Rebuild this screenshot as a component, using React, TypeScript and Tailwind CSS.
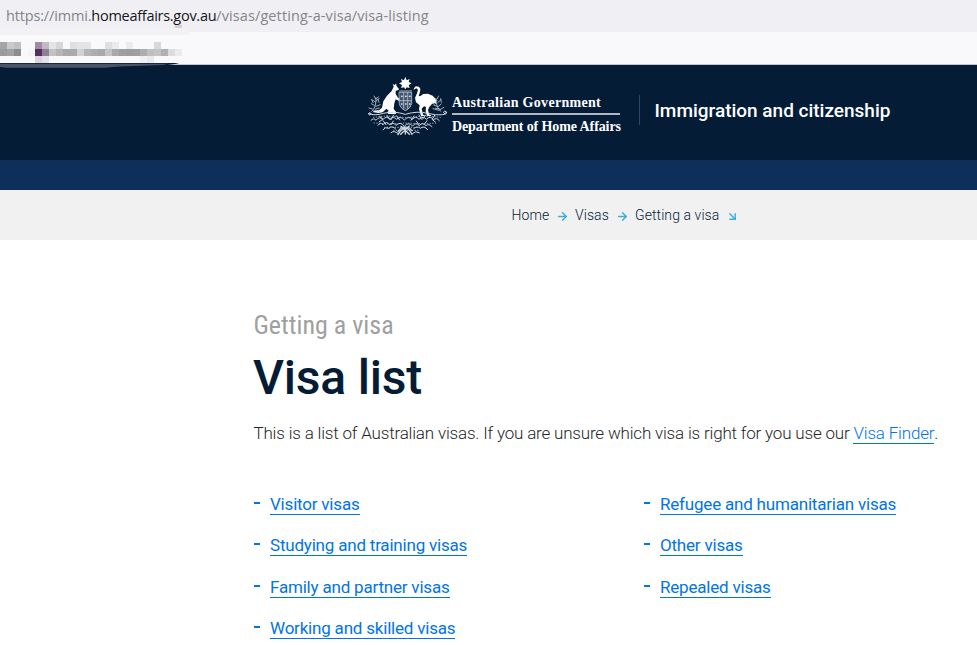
import { ArrowDownRight, ArrowRight } from 'lucide-react';

const leftLinks = ['Visitor visas', 'Studying and training visas', 'Family and partner visas', 'Working and skilled visas'];
const rightLinks = ['Refugee and humanitarian visas', 'Other visas', 'Repealed visas'];

// censored bookmarks, one row of 7px cells per entry
const bookmarkCells = [
  ['#a5a5a8', '#c9c9cc', '#c0c0c3', '', '', '#9f8ba2', '#c2bbc7', '#e4e4e7', '#d6d6d9', '', '#dfdfe2', '#e4e4e7', '#e4e4e7', '', '', '#dfdfe2', '#ebebed', '', '#ebebed', '', '', '', '#d8d8db', '', '', ''],
  ['#9b9b9e', '#a2a2a5', '#8d8d90', '', '#f5f5f7', '#55305b', '#917d96', '#c3c3c6', '#b5b5b8', '#a9a9ac', '#aaaaad', '#d2d2d5', '#b5b5b8', '#adadb0', '#a9a9ac', '#c4c4c7', '#a9a9ac', '#9f9fa2', '#9d9da0', '#9f9fa2', '#adadb0', '#bfbfc2', '#c3c3c6', '#b1b1b4', '#dcdcdf', '#ebebed'],
  ['', '', '', '', '', '#dad3de', '#e5e0e8', '', '', '', '', '', '', '', '', '', '', '', '', '', '#f0f0f2', '#e9e9eb', '', '', '', ''],
];

function Crest() {
  return (
    <svg className="-ml-px h-[60px] w-20 shrink-0" viewBox="24 18 240 180" fill="none" stroke="#e6eaef" strokeLinecap="round" strokeLinejoin="round">
      {/* star */}
      <path fill="#fff" stroke="none" d="M139 20l4 11 9-4-3 9 9 4-9 5 3 9-9-2-4 6-4-6-9 2 3-9-9-5 9-4-3-9 9 4z" />
      <path stroke="#aeb9c7" strokeWidth="3" d="M122 63h36" />
      {/* kangaroo */}
      <path fill="#fff" stroke="none" d="M104 50l-3-9 6 5 4-6 2 9 7 8-3 4-7 1v10l8 13 8-3 2 4-9 6-9-4-4 12-2 17 8 10-2 5H88l-3-5 4-5-7-6-11 11-12 2-16-2v-4l18-3 8-7 4-19 11-17 14-14z" />
      {/* emu */}
      <path fill="#fff" stroke="none" d="M165 55l5-6 10 1 4 7-1 10-4 10 4 2 10-7 14-1 14 6 9 10 2 16-6-5-8 5-7 8-4 9 4 14 5 2v2h-12l-4-14 1-13-6-2-7 7 4 18 5 2v2h-11l-6-20 2-12-11-9-3-13 6-14 3-11-5-4-8 4z" />
      {/* shield */}
      <path fill="#42546b" stroke="#b5bfcb" strokeWidth="2.5" d="M121 67h37v34q-2 13-18 21-17-7-19-21zM134 68v47M146 68v47M121 92h37" />
      <path stroke="#dfe4ea" strokeWidth="5" strokeDasharray="1 11" d="M128 79h30M128 102h26" />
      {/* wattle sprays */}
      <g strokeWidth="2.5" stroke="#bcc6d2">
        <path d="M38 124q15-12 13-41M46 106l-9-5m12-5-10-7m13 4 8-8m-9 24 13-5m-15 13 12-3M50 87l-5-9m7 9 7-7M40 117l-10-3M45 122l18 2M42 98l-4-9m22 8-3-9" />
        <path d="M246 124q-17-13-14-37M238 109l9-7m-11-4 10-9m-12 3-7-8m9 26-12-5m18 12-12-2M234 87l5-9m4 41 12-7M226 102l-8-5M222 116l18 5m7-24-2-11" />
      </g>
      {/* scrolls and foliage */}
      <g strokeWidth="3" stroke="#d3dae2">
        <path d="M28 131q4-6 9 0-5 8-9 0 19 7 46-1 30-8 65 3 36-11 67-3 26 7 45 4 14-1 12-8-6-6-10 1 2 6 7 2" />
        <path d="M36 151q8-9 15 0 10-14 22-3 8-12 20 0 9-12 20 0 11-12 23 2 12-14 24-2 10-12 20 0 13-12 22 0 12-12 22 1 8-8 17 3" />
        <path d="M57 166q6-11 15-2 11-13 20 1 9-11 19 1 13-13 25 3 12-15 25-1 9-13 20-1 10-12 20 0 8-8 18 3" />
        <path d="M72 179q6-10 18-4 9-10 20 2m54-1q10-10 20-1 11-10 22 4M96 188q9-8 20 2M161 190q8-9 20-2" />
        <path d="M62 138l9 10-11 8m24-20 9 12m11-13-8 14m104-14-9 12m-11-12 8 13m39-12-8 12 10 8M112 137l10 13m43-12-9 13M72 152l9 12m123-12-9 12M103 153l-7 11m76-11 8 11" />
        <path strokeWidth="4" d="M117 185q20-31 42 8M159 182q-20-26-42 12M126 169l25 24M151 168l-26 25M139 172v20" />
      </g>
      <path stroke="#b5bfcb" strokeWidth="3" strokeDasharray="1 7" d="M44 142q45-7 97 1 52-8 103-1M45 159q50 4 90 0 50 3 101 0M77 172h124M104 181h73" />
    </svg>
  );
}

function LinkList({ items }: { items: string[] }) {
  return (
    <ul className="w-[390px] shrink-0">
      {items.map(item => (
        <li key={item} className="flex h-[41.4px] items-start">
          <span className="mt-[9px] h-0.5 w-1.5 bg-[#0074e8]" />
          <a href="#" className="ml-2.5 h-[22px] border-b border-[#0074e8] text-[17px] leading-[22px] tracking-[-0.2px] whitespace-nowrap text-[#0074e8]">{item}</a>
        </li>
      ))}
    </ul>
  );
}

export default function App() {
  return (
    <div className="h-[645px] w-[977px] overflow-hidden bg-white font-['Roboto',sans-serif]">
      <div className="h-8 bg-[#f0f0f4] pl-1.5 font-['Open_Sans',sans-serif] text-[14.5px] leading-8 whitespace-nowrap text-[#85858a]">
        <span className="tracking-[-0.16px]">https://immi.</span>
        <span className="tracking-[-0.28px] text-[#15141a]">homeaffairs.gov.au</span>
        <span className="tracking-[0.1px]">/visas/getting-a-visa/visa-listing</span>
      </div>

      <div className="relative h-[33px] border-b border-[#c4c4c8] bg-[#f9f9fb] pt-2.5">
        <div className="absolute -top-1 left-0 h-[7px] w-[190px] rounded-tr-[10px] bg-[#f2f2f5]" />
        <div className="absolute -top-[7px] left-[175px] h-[3px] w-[7px] bg-[#d1d1d5]" />
        {bookmarkCells.map((row, i) => (
          <div key={i} className="flex">
            {row.map((color, j) => (
              <span key={j} className="size-[7px]" style={{ backgroundColor: color || undefined }} />
            ))}
          </div>
        ))}
        <svg className="absolute top-[31px] left-0 h-[5px] w-[180px]" viewBox="0 0 180 5">
          <path fill="#061c36" d="M0 0h179q-2 1-12 2v3H0z" />
          <path fill="#47546a" d="M0 .8h168l-5 1.2-43 1.5-15 1.3H6L0 4z" />
        </svg>
      </div>

      <header className="flex h-[95px] bg-[#051c37] pt-[11px] pl-[368px] text-white">
        <Crest />
        <div className="ml-[5px] w-[168px] pt-[17px] font-['Liberation_Serif',serif] text-[14px] leading-[19px] font-bold whitespace-nowrap">
          <div className="h-[22px] border-b-2 border-[#aeb7c2] tracking-[0.3px]">Australian Government</div>
          <div className="mt-0.5 tracking-[-0.1px]">Department of Home Affairs</div>
        </div>
        <div className="mt-[19px] ml-[19px] h-[30px] border-l border-[#34475e]" />
        <div className="mt-[23px] ml-[14.5px] text-[19px] leading-6 font-medium tracking-[-0.01px] whitespace-nowrap">Immigration and citizenship</div>
      </header>
      <div className="h-[30px] bg-[#0f2f5b]" />

      <nav className="flex h-[50px] items-center bg-[#f1f1f1] pl-[511.5px] text-[14px] font-light tracking-[0.08px] whitespace-nowrap text-[#051c37]">
        <span className="w-[44px]">Home</span>
        <ArrowRight className="mt-0.5 mr-[6.5px] size-[13px] text-[#35ade0]" strokeWidth={2.6} />
        <span className="w-[40.5px]">Visas</span>
        <ArrowRight className="mt-0.5 mr-[6.5px] size-[13px] text-[#35ade0]" strokeWidth={2.6} />
        <span className="w-[91px]">Getting a visa</span>
        <ArrowDownRight className="mt-0.5 size-[13px] text-[#35ade0]" strokeWidth={2.6} />
      </nav>

      <main className="pt-[69px] pl-[254px]">
        <p className="-ml-[0.5px] h-8 font-['Roboto_Condensed','Roboto',sans-serif] text-[26px] leading-8 [font-stretch:75%] whitespace-nowrap text-[#a0a0a0]">Getting a visa</p>
        <h1 className="mt-[9px] -ml-px h-14 text-[48px] leading-[56px] font-medium tracking-[-0.22px] text-[#051c37]">Visa list</h1>
        <p className="mt-4 -ml-[0.5px] h-[22px] text-[17px] leading-[22px] font-light tracking-[-0.185px] whitespace-nowrap text-[#262626]">
          This is a list of Australian visas. If you are unsure which visa is right for you use our{' '}
          <a href="#" className="inline-block h-[22px] border-b border-[#0074e8] text-[#0074e8]">Visa Finder</a>.
        </p>
        <div className="mt-[49px] flex">
          <LinkList items={leftLinks} />
          <LinkList items={rightLinks} />
        </div>
      </main>
    </div>
  );
}
